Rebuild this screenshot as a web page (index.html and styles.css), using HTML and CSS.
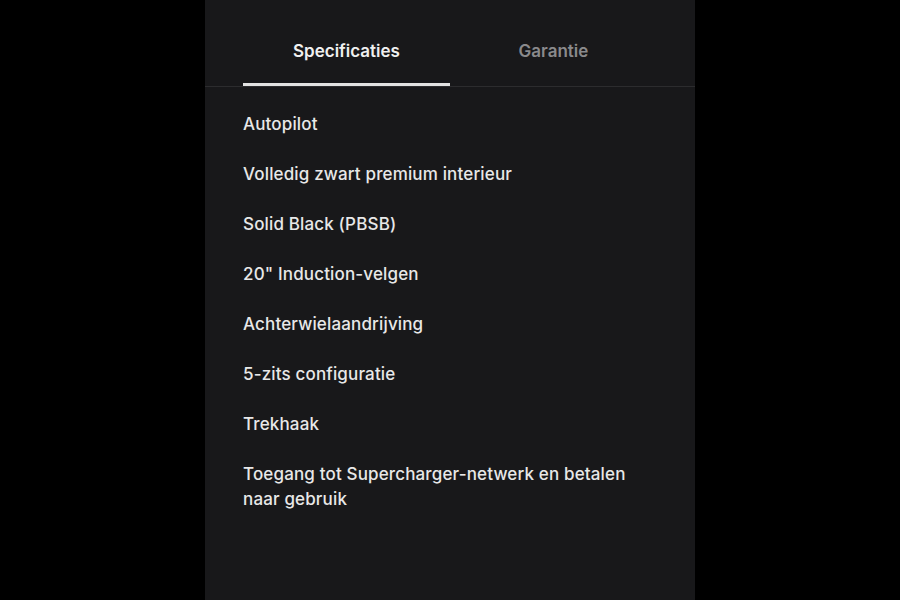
FILE: index.html
```html
<!DOCTYPE html>
<html lang="nl">
<head>
    <meta charset="UTF-8">
    <meta name="viewport" content="width=device-width, initial-scale=1.0">
    <title>Specificaties</title>
    <link rel="stylesheet" href="styles.css">
</head>
<body>

    <div class="panel">
        <div class="tab-bar">
            <div class="tabs">
                <div class="tab active">Specificaties</div>
                <div class="tab">Garantie</div>
            </div>
        </div>

        <ul class="spec-list">
            <li>Autopilot</li>
            <li>Volledig zwart premium interieur</li>
            <li>Solid Black (PBSB)</li>
            <li>20" Induction-velgen</li>
            <li>Achterwielaandrijving</li>
            <li>5-zits configuratie</li>
            <li>Trekhaak</li>
            <li>Toegang tot Supercharger-netwerk en betalen naar gebruik</li>
        </ul>
    </div>

</body>
</html>
```

FILE: styles.css
```css
/* Page */
body {
    font-family: Inter, "Open Sans", sans-serif;
    background-color: #000;
    margin: 0;
    display: flex;
    justify-content: center;
    min-height: 100vh;
}

/* The dark card in the middle */
.panel {
    width: 490px;
    min-height: 600px;
    background-color: #18181a;
    color: #e8e8e8;
}

/* --- TABS --- */
.tab-bar {
    border-bottom: 1px solid #2c2c2e;
    padding: 0 38px;
}

.tabs {
    display: flex;
}

.tab {
    flex: 1;
    text-align: center;
    font-size: 17px;
    font-weight: 600;
    line-height: 24px;
    padding: 39px 0 20px;
    color: #8a8a8c;
    border-bottom: 3px solid transparent;
}

.tab.active {
    color: #f0f0f0;
    border-bottom-color: #e2e2e2;
}

/* --- SPEC LIST --- */
.spec-list {
    list-style: none;
    margin: 0;
    padding: 12px 38px 0;
}

.spec-list li {
    font-size: 17px;
    font-weight: 550;
    line-height: 25px;
    padding: 12.5px 0;
    letter-spacing: 0.15px;
}
```
